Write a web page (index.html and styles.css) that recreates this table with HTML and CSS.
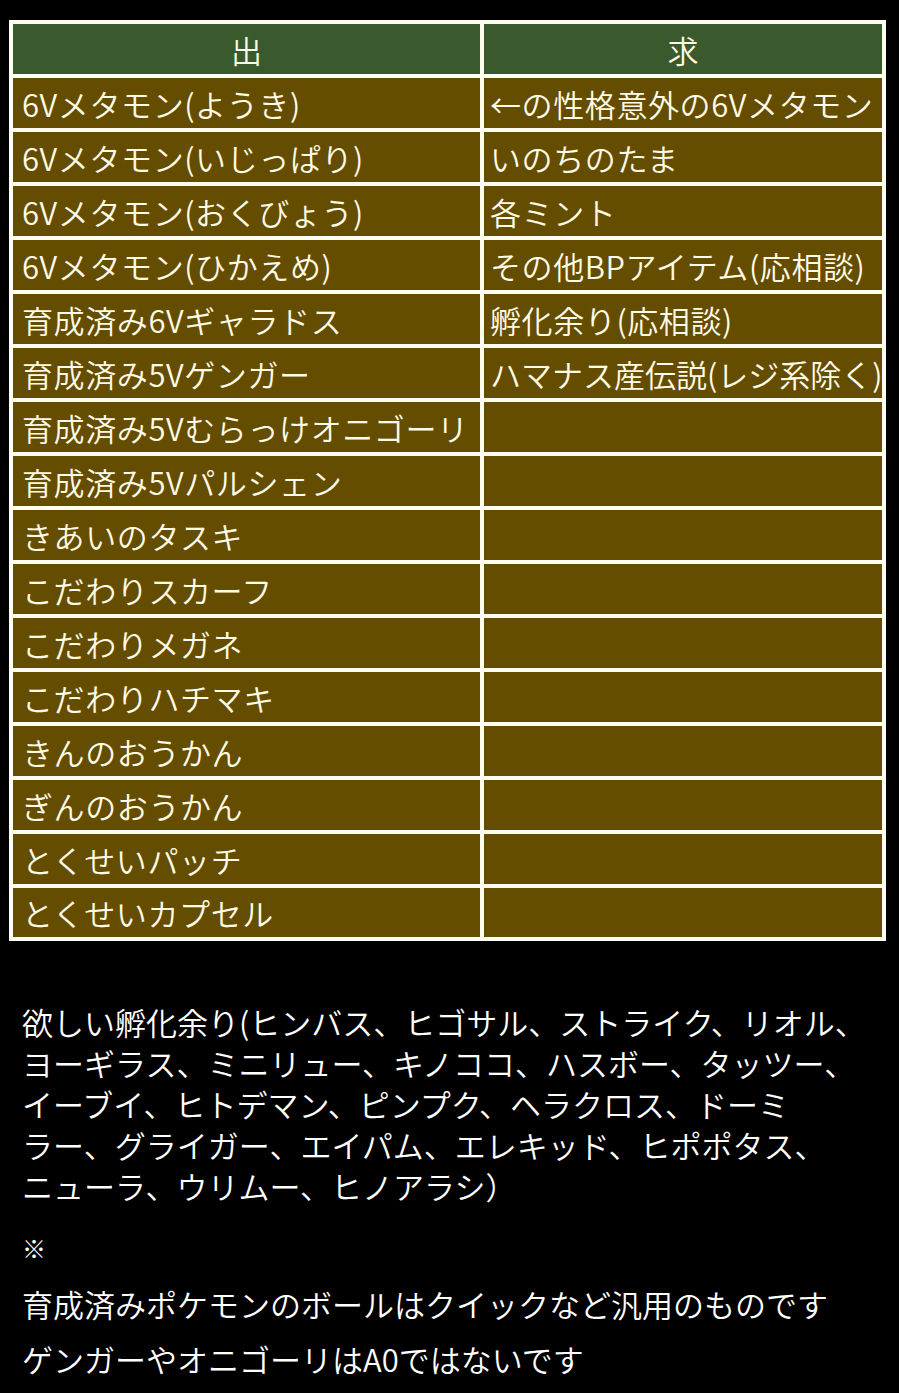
FILE: index.html
```html
<!DOCTYPE html>
<html lang="ja">
<head>
<meta charset="utf-8">
<link rel="stylesheet" href="styles.css">
</head>
<body>
<main class="page">
  <table class="trade">
    <thead>
      <tr><th class="col-give">出</th><th class="col-want">求</th></tr>
    </thead>
    <tbody>
      <tr><td>6Vメタモン(ようき)</td><td>←の性格意外の6Vメタモン</td></tr>
      <tr><td>6Vメタモン(いじっぱり)</td><td>いのちのたま</td></tr>
      <tr><td>6Vメタモン(おくびょう)</td><td>各ミント</td></tr>
      <tr><td>6Vメタモン(ひかえめ)</td><td>その他BPアイテム(応相談)</td></tr>
      <tr><td>育成済み6Vギャラドス</td><td>孵化余り(応相談)</td></tr>
      <tr><td>育成済み5Vゲンガー</td><td class="tight">ハマナス産伝説(レジ系除く)</td></tr>
      <tr><td>育成済み5Vむらっけオニゴーリ</td><td></td></tr>
      <tr><td>育成済み5Vパルシェン</td><td></td></tr>
      <tr><td>きあいのタスキ</td><td></td></tr>
      <tr><td>こだわりスカーフ</td><td></td></tr>
      <tr><td>こだわりメガネ</td><td></td></tr>
      <tr><td>こだわりハチマキ</td><td></td></tr>
      <tr><td>きんのおうかん</td><td></td></tr>
      <tr><td>ぎんのおうかん</td><td></td></tr>
      <tr><td>とくせいパッチ</td><td></td></tr>
      <tr class="last"><td>とくせいカプセル</td><td></td></tr>
    </tbody>
  </table>

  <section class="notes">
    <p class="wish">欲しい孵化余り(ヒンバス、ヒゴサル、ストライク、リオル、<br>ヨーギラス、ミニリュー、キノココ、ハスボー、タッツー、<br>イーブイ、ヒトデマン、ピンプク、ヘラクロス、ドーミ<br>ラー、グライガー、エイパム、エレキッド、ヒポポタス、<br>ニューラ、ウリムー、ヒノアラシ）</p>
    <p class="mark">※</p>
    <p class="line first">育成済みポケモンのボールはクイックなど汎用のものです</p>
    <p class="line">ゲンガーやオニゴーリはA0ではないです</p>
  </section>
</main>
</body>
</html>
```

FILE: styles.css
```css
html, body {
  margin: 0;
  padding: 0;
  background: #000;
}

body {
  font-family: "Noto Sans CJK JP", "Noto Sans", sans-serif;
  font-weight: 350;
  color: #fff;
}

.page {
  padding: 20px 0 0 9px;
}

.trade {
  width: 877px;
  border-collapse: separate;
  border-spacing: 4px;
  background: #fdfdf0;
  table-layout: fixed;
  font-size: 31px;
  color: #fffbe6;
}

.col-give {
  width: 467px;
}

.trade th {
  height: 50px;
  padding: 0;
  background: #3a5a2d;
  font-weight: 350;
  text-align: center;
  line-height: 1;
}

.trade td {
  height: 50px;
  padding: 0 0 0 9px;
  background: #654d00;
  white-space: nowrap;
  overflow: hidden;
  line-height: 1;
  letter-spacing: 0.6px;
}

.trade td + td {
  padding-left: 6px;
}

.trade td.tight {
  letter-spacing: 0;
}

.trade tr.last td {
  height: 49px;
}

.notes {
  padding: 60px 0 0 13px;
  font-size: 31px;
}

.notes p {
  margin: 0;
}

.notes .wish {
  line-height: 41px;
}

.notes .mark {
  margin-top: 22px;
  font-size: 24px;
  font-weight: bold;
  line-height: 40px;
}

.notes .line {
  line-height: 55px;
}

.notes .line.first {
  margin-top: 8px;
}
```
